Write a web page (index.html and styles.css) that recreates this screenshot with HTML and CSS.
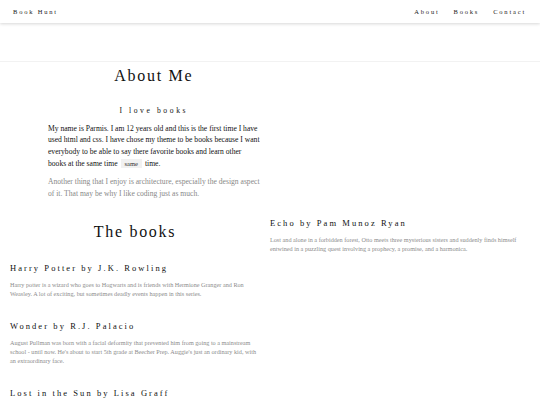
FILE: index.html
```
<!DOCTYPE html>
<html>
<head>
<meta charset="utf-8">
<link rel="stylesheet" href="styles.css">
</head>
<body>
<nav class="navbar">
  <a class="brand" href="#">Book Hunt</a>
  <ul class="nav-links">
    <li><a href="#">About</a></li>
    <li><a href="#">Books</a></li>
    <li><a href="#">Contact</a></li>
  </ul>
</nav>
<div class="hero"></div>
<main class="content">
  <div class="col col-left">
    <section class="about">
      <h1 class="title">About Me</h1>
      <h3 class="subtitle">I love books</h3>
      <p class="lead">My name is Parmis. I am 12 years old and this is the first time I have used html and css. I have chose my theme to be books because I want everybody to be able to say there favorite books and learn other books at the same time <code class="tag">same</code> time.</p>
      <p class="muted">Another thing that I enjoy is architecture, especially the design aspect of it. That may be why I like coding just as much.</p>
    </section>
    <h1 class="title books-title">The books</h1>
    <article class="book">
      <h4 class="book-title">Harry Potter by J.K. Rowling</h4>
      <p class="book-desc">Harry potter is a wizard who goes to Hogwarts and is friends with Hermione Granger and Ron Weasley. A lot of exciting, but sometimes deadly events happen in this series.</p>
    </article>
    <article class="book">
      <h4 class="book-title">Wonder by R.J. Palacio</h4>
      <p class="book-desc">August Pullman was born with a facial deformity that prevented him from going to a mainstream school - until now. He's about to start 5th grade at Beecher Prep. Auggie's just an ordinary kid, with an extraordinary face.</p>
    </article>
    <article class="book">
      <h4 class="book-title">Lost in the Sun by Lisa Graff</h4>
      <p class="book-desc">Trent knows it wasn't his fault. Still, he can't shake the feeling that everyone blames him for the accident.</p>
    </article>
  </div>
  <div class="col col-right">
    <article class="book book-echo">
      <h4 class="book-title">Echo by Pam Munoz Ryan</h4>
      <p class="book-desc">Lost and alone in a forbidden forest, Otto meets three mysterious sisters and suddenly finds himself entwined in a puzzling quest involving a prophecy, a promise, and a harmonica.</p>
    </article>
  </div>
</main>
</body>
</html>
```
FILE: styles.css
```
* { box-sizing: border-box; }
html, body { margin: 0; padding: 0; }
body {
  font-family: "Liberation Serif", "Times New Roman", serif;
  color: #111;
  background: #fff;
  overflow: hidden;
}
.navbar {
  height: 23px;
  display: flex;
  align-items: center;
  justify-content: space-between;
  padding: 0 14px 0 13px;
  box-shadow: 0 1px 3px rgba(0,0,0,0.16);
  background: #fff;
  position: relative;
  font-size: 6.5px;
  line-height: 8px;
}
.navbar a {
  color: #222;
  text-decoration: none;
  letter-spacing: 1.8px;
}
.nav-links {
  list-style: none;
  margin: 0;
  padding: 0;
  display: flex;
  gap: 14px;
}
.hero {
  height: 39px;
  border-bottom: 1px solid #f2f2f2;
}
.content {
  display: grid;
  grid-template-columns: 270px 270px;
}
.about {
  padding: 0 10.5px 0 48px;
}
.title {
  font-weight: normal;
  font-size: 16px;
  letter-spacing: 1.7px;
  text-align: center;
  margin: 0;
  line-height: 22px;
  padding-top: 3px;
}
.subtitle {
  font-weight: normal;
  font-size: 7.6px;
  letter-spacing: 2.6px;
  text-align: center;
  line-height: 10px;
  margin: 19px 0 6.5px;
}
.lead {
  font-size: 7.6px;
  line-height: 11.7px;
  margin: 0;
}
.tag {
  display: inline-block;
  font-family: "Liberation Serif", serif;
  font-size: 6.6px;
  line-height: 9px;
  background: #f1f1f1;
  padding: 0 4px;
  margin: 0 1px;
  color: #333;
}
.muted {
  font-size: 7.6px;
  line-height: 11.7px;
  color: #888;
  margin: 7px 0 0;
}
.books-title {
  margin-top: 18px;
}
.book {
  padding: 0 10px;
  margin-top: 19px;
}
.book + .book {
  margin-top: 21px;
}
.book-title {
  font-weight: normal;
  font-size: 8.5px;
  letter-spacing: 2.07px;
  margin: 0;
  line-height: 12px;
}
.book-desc {
  font-size: 6.2px;
  line-height: 9.4px;
  color: #8c8c8c;
  margin: 6px 0 0;
}
.col-right .book {
  padding: 0 14px 0 0;
}
.book-echo {
  margin-top: 155px;
}
```
